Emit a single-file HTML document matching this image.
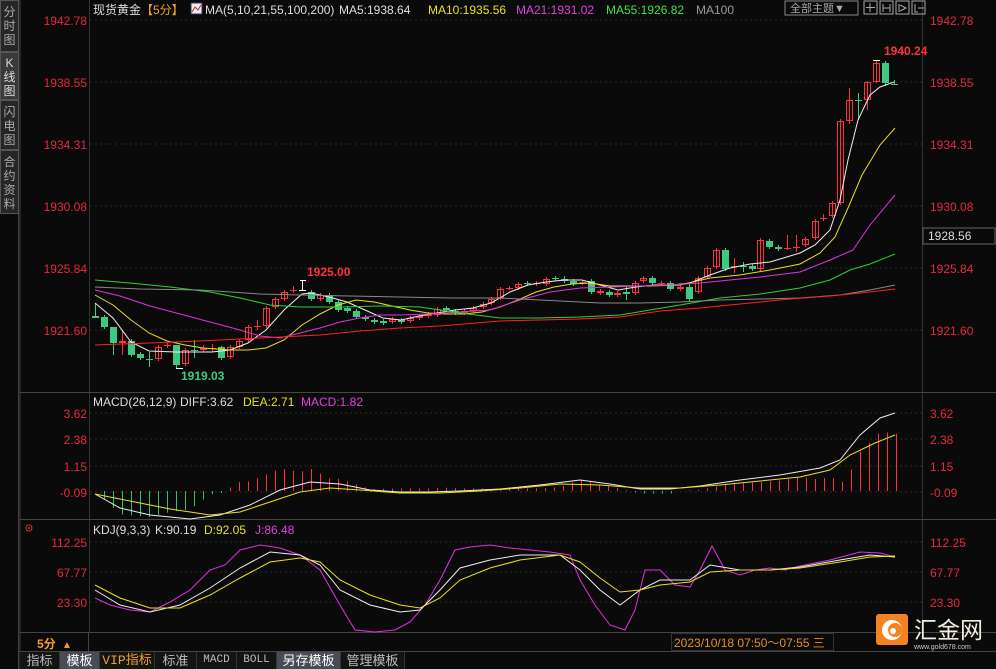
<!DOCTYPE html>
<html><head><meta charset="utf-8">
<style>
html,body{margin:0;padding:0;background:#0a0a0a;width:996px;height:669px;overflow:hidden;font-family:"Liberation Sans","Noto Sans CJK SC",sans-serif;}
svg{position:absolute;left:0;top:0}
.side{position:absolute;left:0;width:19px;background:#262626;border:1px solid #555;color:#aaa;font-size:12px;line-height:14px;text-align:center;box-sizing:border-box}
.tabs{position:absolute;top:652px;left:20px;height:17px;display:flex;font-size:13px}
.tabs div{text-align:center;line-height:17px;color:#bbb;border-right:1px solid #333;background:#141414;box-sizing:border-box}
</style></head><body>
<div class="side" style="top:0;height:52px;padding-top:4px">分<br>时<br>图</div>
<div class="side" style="top:52px;height:48px;background:#3a3a3a;color:#ddd;padding-top:3px">K<br>线<br>图</div>
<div class="side" style="top:100px;height:50px;padding-top:4px">闪<br>电<br>图</div>
<div class="side" style="top:150px;height:64px;padding-top:4px">合<br>约<br>资<br>料</div>
<div class="side" style="top:214px;height:455px;background:#0a0a0a;border:none;border-right:1px solid #444"></div>
<svg id="s" width="996" height="669" xmlns="http://www.w3.org/2000/svg"></svg>
<div class="tabs">
<div style="width:40px">指标</div><div style="width:40px;background:#4a4c55;color:#fff">模板</div><div style="width:55px;color:#f0a020;font-family:'Liberation Mono','Noto Sans CJK SC',monospace">VIP指标</div><div style="width:42px">标准</div><div style="width:40px;font-family:'Liberation Mono',monospace;font-size:11px">MACD</div><div style="width:40px;font-family:'Liberation Mono',monospace;font-size:11px">BOLL</div><div style="width:64px;background:#4a4c55;color:#fff">另存模板</div><div style="width:64px">管理模板</div>
</div>
<script>
const S=document.getElementById('s');let h='';
function L(x1,y1,x2,y2,c,w,d){h+=`<line x1="${x1}" y1="${y1}" x2="${x2}" y2="${y2}" stroke="${c}" stroke-width="${w||1}" ${d?'stroke-dasharray="'+d+'"':''}/>`}
function T(x,y,t,c,s,a,w){h+=`<text x="${x}" y="${y}" fill="${c}" font-size="${s||12}" ${a?'text-anchor="'+a+'"':''} ${w?'font-weight="bold"':''} font-family="Liberation Sans, Noto Sans CJK SC, sans-serif">${t}</text>`}
function P(pts,c){h+=`<polyline fill="none" stroke="${c}" stroke-width="1" points="${pts.map(p=>p.join(',')).join(' ')}"/>`}
L(20,0,20,669,'#444');L(89.5,0,89.5,633,'#333');L(922.5,0,922.5,633,'#333');
L(20,392.5,996,392.5,'#444');L(20,519.5,996,519.5,'#444');L(20,632.5,996,632.5,'#444');L(20,651.5,996,651.5,'#444');
L(88.5,633,88.5,651,'#444');
[[20,'1942.78'],[82,'1938.55'],[144,'1934.31'],[206,'1930.08'],[268,'1925.84'],[330,'1921.60']].forEach(([y,t])=>{L(90,y,922,y,'#2a2a2a',1,'2,3');T(87,y+5,t,'#e8283c',12,'end');T(930,y+5,t,'#e8283c',12)});
[[413,'3.62'],[439,'2.38'],[466,'1.15'],[492,'-0.09']].forEach(([y,t])=>{L(90,y,922,y,'#2a2a2a',1,'2,3');T(87,y+5,t,'#e8283c',12,'end');T(930,y+5,t,'#e8283c',12)});
[[542,'112.25'],[572,'67.77'],[602,'23.30']].forEach(([y,t])=>{L(90,y,922,y,'#2a2a2a',1,'2,3');T(87,y+5,t,'#e8283c',12,'end');T(930,y+5,t,'#e8283c',12)});
h+='<rect x="923" y="228" width="72" height="16" fill="#0a0a0a" stroke="#666"/>';T(928,240,'1928.56','#ddd',12);
T(93,14,'现货黄金','#ddd',12);T(141,14,'【5分】','#f0a020',12);
h+='<rect x="191" y="3" width="11" height="11" fill="#eee" stroke="#336"/><polyline points="192,12 195,7 198,10 201,5" fill="none" stroke="#d22"/>';
T(205,14,'MA(5,10,21,55,100,200)','#ddd',12);T(339,14,'MA5:1938.64','#ddd',12);T(428,14,'MA10:1935.56','#e8e020',12);T(516,14,'MA21:1931.02','#e040e0',12);T(606,14,'MA55:1926.82','#40e040',12);T(696,14,'MA100','#999',12);
h+='<rect x="785" y="1" width="73" height="14" fill="none" stroke="#888"/>';T(790,12,'全部主题▼','#aaa',11);
[864,880,896,912].forEach(x=>h+=`<rect x="${x}" y="1" width="13" height="13" fill="none" stroke="#aaa"/>`);
h+='<path d="M870,3v9M866,7.5h9" stroke="#aaa"/><path d="M883,4v8M890,4v8M883,8h7" stroke="#aaa"/><path d="M899,4v8M900,5l6,3l-6,3" stroke="#aaa" fill="none"/><path d="M915,4v8h3M918,8h6" stroke="#aaa" fill="none"/>';
const C=[[95,316,318,'g',303,318],[104,317,327,'g'],[113,327,343,'g',327,355],[122,341,343,'r',330,355],[131,341,355,'g'],[140,354,358,'g'],[149,359,360,'g',352,367],[158,347,359,'r'],[167,345,346,'r',343,348],[176,345,365,'g',345,368],[185,350,364,'r'],[194,350,351,'g',340,358],[203,348,350,'r',345,352],[212,348,349,'r',344,352],[221,347,358,'g',346,360],[230,347,357,'r'],[239,341,347,'r'],[248,327,340,'r'],[257,326,327,'r',320,330],[266,308,326,'r'],[275,299,307,'r'],[284,292,299,'r'],[293,290,291,'r',286,293],[302,290,291,'w',280,291],[311,292,299,'g'],[320,295,299,'r'],[329,295,302,'g'],[338,302,310,'g'],[347,308,311,'g'],[356,311,317,'g'],[365,317,319,'g'],[374,320,322,'g'],[383,321,323,'g'],[392,319,322,'r'],[401,320,322,'g'],[410,318,321,'r'],[419,316,318,'r'],[428,314,316,'r'],[437,309,315,'r'],[446,308,310,'g'],[455,311,313,'g'],[464,311,313,'r'],[473,308,311,'r'],[483,304,307,'r'],[491,299,303,'r'],[500,289,298,'r'],[509,288,289,'r',286,290],[518,284,288,'r'],[527,283,284,'g'],[536,283,284,'r'],[546,279,284,'r'],[555,278,279,'g'],[564,279,281,'g',276,283],[573,281,284,'g'],[582,282,283,'r'],[591,281,292,'g'],[600,291,293,'r'],[609,292,295,'g'],[617,293,295,'r'],[626,292,294,'g',286,300],[635,283,293,'r'],[643,278,281,'r'],[652,278,283,'g'],[661,283,284,'r'],[670,283,289,'g'],[680,287,289,'r'],[689,287,299,'g',283,301],[698,278,292,'r'],[707,268,277,'r'],[716,250,267,'r'],[725,250,269,'g'],[734,266,267,'r',258,273],[743,266,267,'g',262,272],[752,266,269,'g'],[760,240,269,'r'],[769,241,247,'g'],[778,247,249,'g'],[787,248,249,'r',235,250],[796,247,248,'r',235,252],[805,239,245,'r'],[815,221,238,'r'],[823,218,219,'r',214,221],[832,203,216,'r'],[840,121,203,'r'],[849,100,121,'r',88,124],[858,100,101,'g',93,120],[867,82,100,'r',81,110],[876,63,82,'r',60,83],[885,63,83,'g',61,86],[894,84,85,'g',80,85]];
C.forEach(([x,t,b,c,wt,wb])=>{const col=c=='r'?'#ff3040':c=='g'?'#40c880':'#fff';wt=wt||t-2;wb=wb||b+2;L(x+.5,wt,x+.5,wb,col);
 if(b-t<=1)L(x-3,t+.5,x+4,t+.5,col);else if(c=='r')h+=`<rect x="${x-2.5}" y="${t+.5}" width="6" height="${b-t-1}" fill="none" stroke="${col}"/>`;else h+=`<rect x="${x-3}" y="${t}" width="7" height="${b-t}" fill="${col}"/>`;});
L(300,280.5,306,280.5,'#fff');L(176,368.5,183,368.5,'#fff');L(873,60.5,880,60.5,'#fff');
P([[95,303],[113,318],[131,342],[149,351],[176,352],[212,352],[230,350],[248,343],[266,330],[284,310],[302,294],[311,293],[329,297],[347,302],[365,310],[383,318],[401,320],[419,316],[437,313],[455,310],[473,308],[491,303],[510,292],[528,285],[546,282],[564,280],[582,280],[600,285],[618,290],[636,287],[654,285],[672,285],[690,283],[710,275],[730,268],[750,264],[770,262],[790,256],[800,253],[815,245],[830,230],[840,200],[848,160],[858,120],[870,95],[880,87],[894,82]],'#eee');
P([[95,295],[113,305],[131,320],[149,333],[167,341],[185,345],[203,348],[230,350],[248,350],[266,348],[284,340],[302,325],[320,314],[338,305],[356,300],[374,302],[392,306],[410,310],[428,313],[446,314],[464,314],[482,312],[500,307],[518,300],[536,292],[554,287],[572,284],[590,283],[610,286],[650,286],[680,285],[710,278],[740,275],[770,270],[800,264],[820,253],[835,237],[848,208],[862,175],[880,145],[895,128]],'#e8e020');
P([[95,290],[120,296],[150,306],[180,314],[210,322],[240,330],[260,336],[280,338],[300,333],[320,328],[340,322],[360,318],[380,315],[400,315],[430,314],[460,312],[490,310],[520,300],[550,292],[580,288],[610,287],[640,286],[670,285],[700,283],[730,280],[760,277],[800,272],[830,260],[853,250],[870,225],[895,195]],'#e030e0');
P([[95,280],[130,283],[170,287],[210,292],[240,298],[270,305],[300,307],[340,307],[380,306],[420,307],[460,313],[500,318],[540,318],[580,317],[620,315],[650,310],[680,305],[720,298],[760,294],[800,288],[830,280],[850,270],[870,264],[895,254]],'#30d030');
P([[95,287],[140,289],[200,290],[260,294],[300,295],[350,296],[400,297],[450,298],[500,298],[540,300],[600,303],[640,303],[680,302],[720,300],[760,299],[800,298],[840,295],[870,290],[895,285]],'#888');
P([[95,345],[150,343],[200,341],[240,339],[280,337],[320,335],[360,331],[400,328],[440,326],[500,321],[540,320],[580,319],[620,317],[660,311],[700,308],[740,304],[790,299],[830,296],[860,293],[895,289]],'#ff2020');
T(307,276,'1925.00','#ff3040',12,null,1);T(181,380,'1919.03','#40c880',12,null,1);T(884,55,'1940.24','#ff3040',12,null,1);
T(93,406,'MACD(26,12,9)','#ddd',12);T(180,406,'DIFF:3.62','#ddd',12);T(243,406,'DEA:2.71','#e8e020',12);T(301,406,'MACD:1.82','#e040e0',12);
const DIF=[[95,494],[120,508],[150,515],[190,519],[220,515],[250,505],[280,490],[310,482],[340,484],[370,490],[400,492],[430,492],[460,491],[500,489],[540,485],[580,480],[610,484],[640,489],[670,489],[700,486],[740,480],[780,475],[820,468],[840,460],[860,435],[880,418],[895,413]];
const DEA=[[95,494],[130,501],[170,509],[210,515],[240,512],[270,502],[300,492],[330,488],[360,490],[400,493],[440,493],[480,491],[520,488],[560,484],[600,485],[640,488],[680,488],[720,485],[760,481],[800,477],[830,470],[850,455],[875,443],[895,435]];
function I(a,x){for(let i=1;i<a.length;i++)if(x<=a[i][0]){const [x0,y0]=a[i-1],[x1,y1]=a[i];return y0+(y1-y0)*(x-x0)/(x1-x0)}return a[a.length-1][1]}
for(let x=95;x<=897;x+=9){const d=(I(DEA,x)-I(DIF,x))*2.6;const z=491;if(d>0)L(x+.5,z-d,x+.5,z,'#ff3040');else L(x+.5,z,x+.5,z-d,'#30c060');}
P(DIF,'#eee');P(DEA,'#e8e020');
h+='<circle cx="29" cy="528" r="3" fill="none" stroke="#e03030"/><circle cx="29" cy="528" r="1" fill="#e03030"/>';
T(93,534,'KDJ(9,3,3)','#ddd',12);T(155,534,'K:90.19','#ddd',12);T(204,534,'D:92.05','#e8e020',12);T(255,534,'J:86.48','#e040e0',12);
P([[95,598],[110,605],[130,610],[150,612],[170,602],[190,590],[210,570],[225,565],[240,550],[260,545],[280,548],[300,555],[320,570],[340,605],[355,630],[375,632],[395,630],[410,622],[425,605],[440,580],[455,550],[470,547],[490,545],[510,548],[530,550],[550,552],[570,555],[580,580],[595,605],[610,625],[625,630],[635,610],[645,570],[660,570],[675,585],[690,587],[700,570],[712,546],[725,570],[740,575],[755,570],[770,568],[785,570],[800,566],[830,560],[860,552],[880,553],[895,557]],'#e030e0');
P([[95,590],[120,605],[150,612],[180,605],[210,588],[240,568],[270,552],[300,555],[320,565],[340,590],[370,605],[400,612],[420,610],[440,590],[460,568],[490,560],[520,555],[560,555],[580,570],[600,590],[620,605],[640,590],[660,580],[690,580],[710,565],[740,570],[770,570],[800,567],[840,560],[870,555],[895,557]],'#eee');
P([[95,585],[120,598],[150,608],[180,608],[210,595],[240,578],[270,562],[300,558],[320,562],[340,580],[370,595],[400,605],[420,608],[440,598],[460,580],[490,568],[520,560],[560,555],[580,562],[600,578],[620,592],[640,590],[660,585],[690,582],[710,572],[740,570],[770,570],[800,568],[840,562],[870,557],[895,556]],'#e8e020');
T(37,648,'5分','#f0a020',12,null,1);T(62,648,'▲','#f0a020',10);
h+='<rect x="671.5" y="633.5" width="162" height="17" fill="none" stroke="#333"/>';T(674,647,'2023/10/18 07:50～07:55 三','#e89020',12);
h+='<rect x="876" y="614" width="32" height="31" rx="3" fill="#f58220"/><circle cx="892" cy="630" r="10" fill="#fff"/><circle cx="895" cy="630" r="7" fill="#f58220"/><circle cx="893" cy="631" r="3" fill="#fff"/>';
T(914,638,'汇金网','#f2eee0',23);T(914,649,'www.gold678.com','#ccc',7);
S.innerHTML=h;
</script>
</body></html>
